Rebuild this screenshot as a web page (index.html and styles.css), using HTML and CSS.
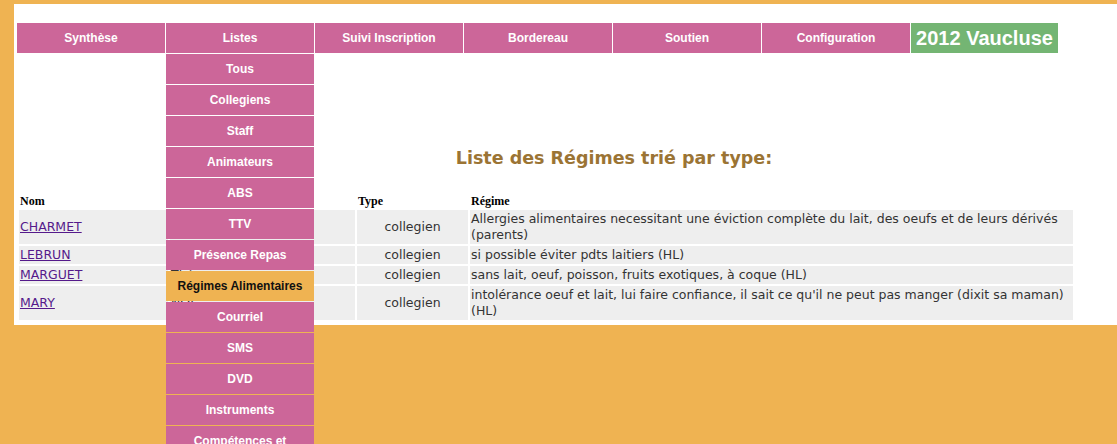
FILE: index.html
```html
<!DOCTYPE html>
<html lang="fr">
<head>
<meta charset="utf-8">
<title>Liste des Régimes</title>
<link rel="stylesheet" href="styles.css">
</head>
<body>
<div class="page">
  <nav class="menu">
    <div class="menu-item">Synthèse</div>
    <div class="menu-item has-sub">Listes
      <div class="submenu">
        <div class="sub-item">Tous</div>
        <div class="sub-item">Collegiens</div>
        <div class="sub-item">Staff</div>
        <div class="sub-item">Animateurs</div>
        <div class="sub-item">ABS</div>
        <div class="sub-item">TTV</div>
        <div class="sub-item">Présence Repas</div>
        <div class="sub-item active">Régimes Alimentaires</div>
        <div class="sub-item">Courriel</div>
        <div class="sub-item">SMS</div>
        <div class="sub-item">DVD</div>
        <div class="sub-item">Instruments</div>
        <div class="sub-item">Compétences et talents</div>
      </div>
    </div>
    <div class="menu-item">Suivi Inscription</div>
    <div class="menu-item">Bordereau</div>
    <div class="menu-item">Soutien</div>
    <div class="menu-item">Configuration</div>
    <div class="menu-item brand">2012 Vaucluse</div>
  </nav>

  <h2 class="title">Liste des Régimes trié par type:</h2>

  <table class="list">
    <thead>
      <tr>
        <th class="c-nom">Nom</th>
        <th class="c-prenom">Prénom</th>
        <th class="c-type">Type</th>
        <th class="c-regime">Régime</th>
      </tr>
    </thead>
    <tbody>
      <tr>
        <td><a href="#">CHARMET</a></td>
        <td>Lucie</td>
        <td class="center">collegien</td>
        <td>Allergies alimentaires necessitant une éviction complète du lait, des oeufs et de leurs dérivés (parents)</td>
      </tr>
      <tr>
        <td><a href="#">LEBRUN</a></td>
        <td>Anne</td>
        <td class="center">collegien</td>
        <td>si possible éviter pdts laitiers (HL)</td>
      </tr>
      <tr>
        <td><a href="#">MARGUET</a></td>
        <td>Théo</td>
        <td class="center">collegien</td>
        <td>sans lait, oeuf, poisson, fruits exotiques, à coque (HL)</td>
      </tr>
      <tr>
        <td><a href="#">MARY</a></td>
        <td>NOÉ</td>
        <td class="center">collegien</td>
        <td>intolérance oeuf et lait, lui faire confiance, il sait ce qu'il ne peut pas manger (dixit sa maman) (HL)</td>
      </tr>
    </tbody>
  </table>
</div>
</body>
</html>
```

FILE: styles.css
```css
html, body {
  margin: 0;
  padding: 0;
  height: 100%;
  overflow: hidden;
  background: #efb352;
}

body {
  padding-top: 4px;
  box-sizing: border-box;
  font-family: "DejaVu Sans", Verdana, sans-serif;
}

.page {
  margin-left: 14px;
  background: #ffffff;
  padding: 19px 0 3px 3px;
}

.menu {
  display: flex;
  gap: 1px;
  height: 30px;
}

.menu-item {
  width: 148px;
  height: 30px;
  background: #cc6699;
  color: #ffffff;
  font-family: "Liberation Sans", Arial, sans-serif;
  font-weight: bold;
  font-size: 12px;
  display: flex;
  align-items: center;
  justify-content: center;
}

.menu-item.has-sub {
  position: relative;
}

.menu-item.brand {
  width: 147px;
  background: #74b573;
  font-size: 20px;
}

.submenu {
  position: absolute;
  top: 31px;
  left: 0;
  width: 148px;
  display: flex;
  flex-direction: column;
  gap: 1px;
  z-index: 10;
}

.sub-item {
  min-height: 30px;
  box-sizing: border-box;
  padding: 8px 8px;
  line-height: 14px;
  background: #cc6699;
  color: #ffffff;
  font-family: "Liberation Sans", Arial, sans-serif;
  font-weight: bold;
  font-size: 12px;
  text-align: center;
}

.sub-item.active {
  background: #efb352;
  color: #111111;
}

.title {
  margin: 95px 0 0 0;
  padding-left: 94px;
  text-align: center;
  font-family: "DejaVu Sans", Verdana, sans-serif;
  font-weight: bold;
  font-size: 17.5px;
  line-height: 20px;
  color: #9b7434;
}

.list {
  margin-top: 22px;
  border-spacing: 2px;
  width: 1058px;
  table-layout: fixed;
  font-size: 12.5px;
  color: #333333;
}

.list th {
  font-family: "Liberation Serif", "Times New Roman", serif;
  font-weight: bold;
  font-size: 12px;
  color: #000000;
  text-align: left;
  padding: 1px 1px 0 1px;
  height: 15px;
  line-height: 14px;
  vertical-align: bottom;
}

.list th.c-nom { width: 147px; }
.list th.c-prenom { width: 183px; }
.list th.c-type { width: 109px; }

.list td {
  background: #eeeeee;
  padding: 1px;
  line-height: 16px;
  vertical-align: middle;
}

.list td.center {
  text-align: center;
}

.list a {
  color: #551a8b;
  text-decoration: underline;
}
```
